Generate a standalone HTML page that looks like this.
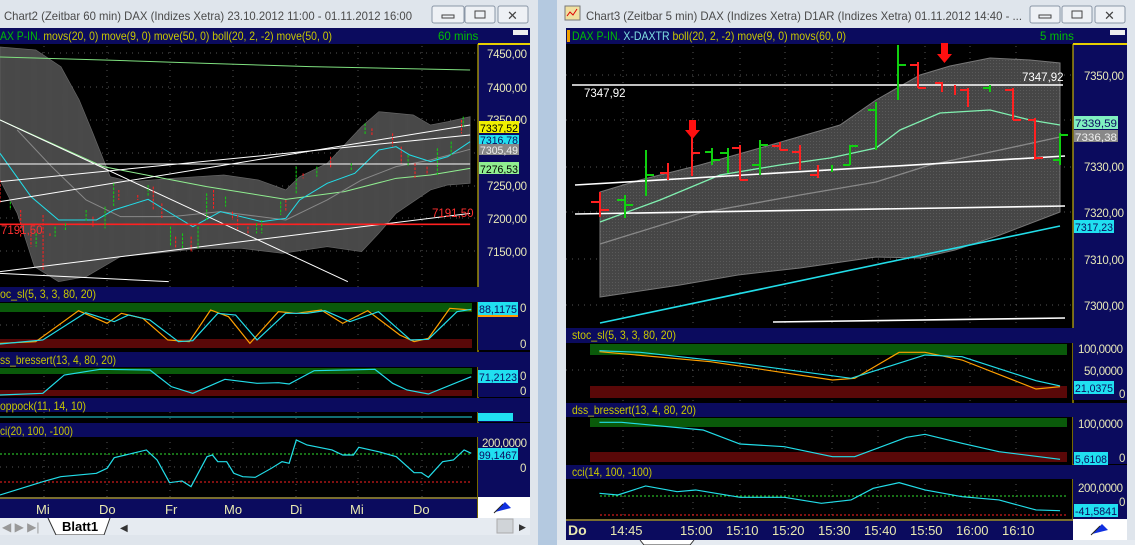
<!DOCTYPE html>
<html><head><meta charset="utf-8"><style>
html,body{margin:0;padding:0;width:1135px;height:545px;overflow:hidden;background:#b8cce0}
svg{display:block}
text{font-family:"Liberation Sans",sans-serif}
.t{font-size:12px;fill:#4a4a4a}
.h{font-size:12px;fill:#c8c800}
.ax{font-size:11.5px;fill:#e8e8b8}
.d{font-size:13px;fill:#e8e8b0}
</style></head><body>
<svg width="1135" height="545" viewBox="0 0 1135 545" xmlns="http://www.w3.org/2000/svg">
<defs>
<pattern id="dots" width="3" height="3" patternUnits="userSpaceOnUse"><rect width="3" height="3" fill="#464646"/><rect width="1" height="1" fill="#5a5a5a"/></pattern>
</defs>
<rect x="537" y="0" width="22" height="545" fill="#b4c9e0"/>
<!-- LEFT WINDOW -->
<rect x="0" y="0" width="538" height="545" fill="#dfe5ec"/>
<text x="4" y="20" class="t" textLength="408" lengthAdjust="spacingAndGlyphs">Chart2 (Zeitbar 60 min)  DAX (Indizes Xetra) 23.10.2012 11:00 - 01.11.2012 16:00</text>
<g fill="#eef1f5" stroke="#8a96a6"><rect x="432" y="6" width="32" height="17" rx="2"/><rect x="465" y="6" width="30" height="17" rx="2"/><rect x="498" y="6" width="30" height="17" rx="2"/></g>
<rect x="442" y="15" width="12" height="3" fill="none" stroke="#444"/><rect x="475" y="11" width="10" height="7" fill="none" stroke="#444"/>
<text x="507" y="20" style="font-size:13px;fill:#444">✕</text>
<rect x="0" y="28" width="530" height="490" fill="#000"/>
<rect x="0" y="28" width="530" height="16" fill="#0b0b5e"/>
<text x="0" y="40" class="h" textLength="332" lengthAdjust="spacingAndGlyphs"><tspan fill="#00c000">AX P-IN.</tspan> movs(20, 0) move(9, 0) move(50, 0) boll(20, 2, -2) move(50, 0)</text>
<text x="438" y="40" style="font-size:11.5px;fill:#00c000">60 mins</text>
<rect x="513" y="30" width="15" height="5" fill="#eee"/>
<g stroke="#555" stroke-dasharray="1,5"><line x1="44" y1="46" x2="44" y2="497"/><line x1="107" y1="46" x2="107" y2="497"/><line x1="170" y1="46" x2="170" y2="497"/><line x1="233" y1="46" x2="233" y2="497"/><line x1="296" y1="46" x2="296" y2="497"/><line x1="358" y1="46" x2="358" y2="497"/><line x1="422" y1="46" x2="422" y2="497"/>
<line x1="0" y1="53" x2="477" y2="53"/><line x1="0" y1="87" x2="477" y2="87"/><line x1="0" y1="120" x2="477" y2="120"/><line x1="0" y1="153" x2="477" y2="153"/><line x1="0" y1="186" x2="477" y2="186"/><line x1="0" y1="218" x2="477" y2="218"/><line x1="0" y1="251" x2="477" y2="251"/></g>
<g transform="translate(0,100) scale(0.3444,0.3333)" fill="none">
<polygon fill="url(#dots)" stroke="#666" stroke-width="2" points="0,-159 104,-150 177,-100 230,0 270,100 320,230 380,245 500,235 650,225 750,240 830,270 870,230 950,190 1050,80 1100,35 1200,45 1250,75 1300,65 1365,50 1365,250 1300,255 1250,270 1150,340 1100,400 1050,455 950,440 820,460 700,445 580,445 500,455 350,470 250,530 170,545 100,500 50,340 0,240"/>
<g stroke-width="3">
<polyline stroke="#7fe07f" points="0,-129 300,-120 600,-110 900,-100 1365,-90"/>
<polyline stroke="#90ee90" points="0,60 300,200 500,240 600,260 830,298 1000,275 1150,235 1250,225 1365,205"/>
<polyline stroke="#888" points="50,90 150,200 250,300 350,350 500,350 640,335 830,360 950,300 1050,240 1150,200 1250,180 1365,148"/>
<polyline stroke="#22dde8" points="0,160 90,290 170,360 280,360 330,330 430,298 480,330 560,380 640,335 760,365 830,355 870,300 950,250 1030,220 1100,150 1150,140 1190,165 1250,185 1300,170 1365,125"/>
<line stroke="#fff" x1="0" y1="192" x2="1365" y2="192"/>
<line stroke="#fff" x1="0" y1="305" x2="1365" y2="75"/>
<line stroke="#fff" x1="0" y1="245" x2="1365" y2="105"/>
<line stroke="#fff" x1="0" y1="60" x2="1010" y2="545"/>
<line stroke="#fff" x1="0" y1="515" x2="1365" y2="340"/>
<line stroke="#fff" x1="0" y1="520" x2="490" y2="545"/>
<line stroke="#ff2020" stroke-width="5" x1="0" y1="373" x2="1365" y2="373"/>
</g>
<g stroke-width="3" stroke-dasharray="8,4">
<path stroke="#ff2020" d="M0 240V310M60 330V410M90 390V440M125 345V510M145 400V410M270 350V380M345 270V300M400 285V300M445 260V330M470 310V355M510 410V445M555 410V455M620 270V330M675 335V360M690 345V390M720 380V400M830 300V335M880 220V235M960 170V205M1080 85V105M1140 100V140M1165 140V190M1205 190V235M1240 200V225M1340 60V100"/>
<path stroke="#10d010" d="M30 305V330M105 400V440M160 380V410M190 370V390M250 330V365M305 320V385M330 250V320M430 255V290M495 380V440M530 400V445M575 380V445M600 280V360M655 290V320M745 370V400M760 360V400M815 305V345M860 200V280M920 200V230M1020 190V215M1060 70V105M1185 165V200M1270 145V225M1310 125V165M1345 50V80"/>
</g>
</g>
<text x="1" y="234" style="font-size:11.5px;fill:#ff3030">7191,50</text>
<text x="432" y="217" style="font-size:11.5px;fill:#ff3030">7191,50</text>
<rect x="478" y="44" width="52" height="244" fill="#0b0b5e"/>
<line x1="478" y1="44" x2="530" y2="44" stroke="#e8d000" stroke-width="2"/>
<line x1="478" y1="44" x2="478" y2="518" stroke="#e8d000"/>
<g class="ax"><text x="487" y="58" textLength="40">7450,00</text><text x="487" y="92" textLength="40">7400,00</text><text x="487" y="124" textLength="40">7350,00</text></g>
<rect x="479" y="121" width="40" height="12" fill="#f0f000"/><text x="480" y="132" style="font-size:11px;fill:#000" textLength="38" lengthAdjust="spacingAndGlyphs">7337,52</text>
<rect x="479" y="135" width="40" height="9" fill="#20e0f0"/><text x="480" y="144" style="font-size:11px;fill:#0b0b5e" textLength="38" lengthAdjust="spacingAndGlyphs">7316,78</text>
<rect x="479" y="144" width="40" height="11" fill="#888"/><text x="480" y="154" style="font-size:11px;fill:#eee" textLength="38" lengthAdjust="spacingAndGlyphs">7305,49</text>
<rect x="479" y="162" width="40" height="12" fill="#90ee90"/><text x="480" y="173" style="font-size:11px;fill:#000" textLength="38" lengthAdjust="spacingAndGlyphs">7276,53</text>
<g class="ax"><text x="487" y="190" textLength="40">7250,00</text><text x="487" y="223" textLength="40">7200,00</text><text x="487" y="256" textLength="40">7150,00</text></g>
<!-- left stoc -->
<rect x="0" y="287" width="530" height="15" fill="#0b0b5e"/>
<text x="0" y="298" class="h" textLength="96" lengthAdjust="spacingAndGlyphs">oc_sl(5, 3, 3, 80, 20)</text>
<rect x="0" y="303" width="472" height="9" fill="#0a5a0a"/><rect x="0" y="339" width="472" height="9" fill="#5a0808"/>
<line x1="0" y1="325" x2="472" y2="325" stroke="#555" stroke-dasharray="1,5"/>
<rect x="478" y="302" width="52" height="48" fill="#0b0b5e"/>
<rect x="478" y="302" width="40" height="13" fill="#20e0f0"/><text x="479" y="313" style="font-size:11px;fill:#0b0b5e" textLength="38" lengthAdjust="spacingAndGlyphs">88,1175</text>
<rect x="478" y="315" width="40" height="2" fill="#ff9a00"/>
<text x="520" y="312" class="ax">0</text><text x="520" y="348" class="ax">0</text>
<g transform="translate(0,280) scale(0.357,0.3333)" fill="none" stroke-width="3.5">
<polyline stroke="#ffa000" points="0,190 100,185 220,92 300,130 340,100 400,115 470,180 530,185 590,90 640,110 700,190 780,95 830,100 900,90 960,130 1030,92 1120,165 1160,185 1200,175 1260,85 1320,90"/>
<polyline stroke="#22dde8" points="0,192 120,180 240,98 320,125 360,105 420,120 500,185 540,182 610,100 660,105 720,180 800,100 860,100 910,92 980,125 1060,95 1150,180 1200,178 1280,95 1320,88"/>
</g>
<rect x="0" y="352" width="530" height="15" fill="#0b0b5e"/>
<text x="0" y="364" class="h" textLength="116" lengthAdjust="spacingAndGlyphs">ss_bressert(13, 4, 80, 20)</text>
<rect x="0" y="368" width="472" height="6" fill="#0a5a0a"/><rect x="0" y="390" width="472" height="6" fill="#5a0808"/>
<rect x="478" y="367" width="52" height="30" fill="#0b0b5e"/>
<rect x="478" y="370" width="40" height="13" fill="#20e0f0"/><text x="479" y="381" style="font-size:11px;fill:#0b0b5e" textLength="38" lengthAdjust="spacingAndGlyphs">71,2123</text>
<text x="520" y="380" class="ax">0</text><text x="520" y="395" class="ax">0</text>
<g transform="translate(0,280) scale(0.357,0.3333)" fill="none" stroke-width="3.5">
<polyline stroke="#22dde8" points="0,345 120,340 180,285 280,268 420,270 480,320 540,340 630,298 720,310 780,308 810,312 880,272 1050,268 1100,310 1140,330 1200,342 1320,290"/>
</g>
<rect x="0" y="398" width="530" height="14" fill="#0b0b5e"/>
<text x="0" y="410" class="h" textLength="86" lengthAdjust="spacingAndGlyphs">oppock(11, 14, 10)</text>
<line x1="0" y1="417" x2="472" y2="417" stroke="#22dde8"/>
<rect x="478" y="412" width="52" height="10" fill="#0b0b5e"/><rect x="478" y="413" width="35" height="8" fill="#20e0f0"/>
<rect x="0" y="423" width="530" height="14" fill="#0b0b5e"/>
<text x="0" y="435" class="h" textLength="73" lengthAdjust="spacingAndGlyphs">ci(20, 100, -100)</text>
<line x1="0" y1="454" x2="472" y2="454" stroke="#30e030" stroke-dasharray="2,2"/>
<line x1="0" y1="482" x2="472" y2="482" stroke="#ff2020" stroke-dasharray="2,2"/>
<line x1="0" y1="467" x2="472" y2="467" stroke="#555" stroke-dasharray="1,5"/>
<rect x="478" y="437" width="52" height="60" fill="#0b0b5e"/>
<text x="482" y="447" class="ax" textLength="45">200,0000</text>
<rect x="478" y="448" width="40" height="12" fill="#20e0f0"/><text x="479" y="459" style="font-size:11px;fill:#0b0b5e" textLength="38" lengthAdjust="spacingAndGlyphs">99,1467</text>
<text x="520" y="472" class="ax">0</text>
<g transform="translate(0,280) scale(0.357,0.3333)" fill="none" stroke-width="3.5">
<polyline stroke="#22dde8" points="0,645 120,605 170,590 270,580 300,565 320,533 410,510 440,540 475,608 510,603 535,620 580,530 595,525 610,545 635,545 655,580 680,590 715,592 760,565 790,545 810,550 830,480 860,495 930,510 960,525 990,525 1005,502 1060,515 1110,530 1160,578 1180,578 1200,592 1240,545 1270,540 1300,510 1320,520"/>
</g>
<rect x="0" y="497" width="477" height="21" fill="#0b0b5e"/>
<line x1="0" y1="498" x2="477" y2="498" stroke="#e8d000"/>
<text x="36" y="514" class="d">Mi</text><text x="99" y="514" class="d">Do</text><text x="165" y="514" class="d">Fr</text><text x="224" y="514" class="d">Mo</text><text x="290" y="514" class="d">Di</text><text x="350" y="514" class="d">Mi</text><text x="413" y="514" class="d">Do</text>
<rect x="478" y="497" width="52" height="21" fill="#fff"/>
<path d="M495 512 L505 502 L511 508 Z" fill="#1030e0"/><line x1="494" y1="513" x2="503" y2="504" stroke="#222"/>
<rect x="0" y="518" width="530" height="17" fill="#e6ebf1"/>
<text x="2" y="531" style="font-size:12px;fill:#999">◀ ▶ ▶|</text>
<path d="M48 518 L56 535 L104 535 L110 518" fill="#fff" stroke="#333"/>
<text x="62" y="531" style="font-size:13px;font-weight:bold;fill:#000">Blatt1</text>
<text x="120" y="531" style="font-size:10px;fill:#333">◀</text>
<rect x="497" y="519" width="16" height="14" fill="#d0d4d8" stroke="#aaa"/>
<text x="519" y="530" style="font-size:9px;fill:#333">▶</text>
<rect x="0" y="535" width="538" height="10" fill="#dfe5ec"/>
<!-- RIGHT WINDOW -->
<rect x="557" y="0" width="578" height="545" fill="#dfe5ec"/>
<rect x="565" y="6" width="15" height="14" fill="#f0e0a0" stroke="#777"/><path d="M567 16 l3 -4 l3 3 l4 -6" stroke="#d00" fill="none"/>
<text x="586" y="20" class="t" textLength="436" lengthAdjust="spacingAndGlyphs">Chart3 (Zeitbar 5 min)  DAX (Indizes Xetra) D1AR (Indizes Xetra) 01.11.2012 14:40 - ...</text>
<g fill="#eef1f5" stroke="#8a96a6"><rect x="1030" y="6" width="30" height="17" rx="2"/><rect x="1062" y="6" width="30" height="17" rx="2"/><rect x="1095" y="6" width="30" height="17" rx="2"/></g>
<rect x="1039" y="15" width="12" height="3" fill="none" stroke="#444"/><rect x="1072" y="11" width="10" height="7" fill="none" stroke="#444"/>
<text x="1104" y="20" style="font-size:13px;fill:#444">✕</text>
<rect x="566" y="28" width="561" height="512" fill="#000"/>
<rect x="566" y="28" width="561" height="16" fill="#0b0b5e"/>
<rect x="567" y="30" width="3" height="12" fill="#f0a000"/>
<text x="572" y="40" class="h" textLength="274" lengthAdjust="spacingAndGlyphs"><tspan fill="#00c000">DAX P-IN.</tspan> <tspan fill="#7fe0e0">X-DAXTR</tspan> boll(20, 2, -2) move(9, 0) movs(60, 0)</text>
<text x="1040" y="40" style="font-size:11.5px;fill:#00c000">5 mins</text>
<rect x="1110" y="30" width="15" height="5" fill="#eee"/>
<g stroke="#555" stroke-dasharray="1,5"><line x1="623" y1="46" x2="623" y2="518"/><line x1="693" y1="46" x2="693" y2="518"/><line x1="740" y1="46" x2="740" y2="518"/><line x1="785" y1="46" x2="785" y2="518"/><line x1="832" y1="46" x2="832" y2="518"/><line x1="878" y1="46" x2="878" y2="518"/><line x1="925" y1="46" x2="925" y2="518"/><line x1="970" y1="46" x2="970" y2="518"/><line x1="1016" y1="46" x2="1016" y2="518"/>
<line x1="566" y1="75" x2="1073" y2="75"/><line x1="566" y1="120" x2="1073" y2="120"/><line x1="566" y1="167" x2="1073" y2="167"/><line x1="566" y1="212" x2="1073" y2="212"/><line x1="566" y1="259" x2="1073" y2="259"/><line x1="566" y1="305" x2="1073" y2="305"/></g>
<polygon fill="url(#dots)" stroke="#777" points="600,192 640,180 700,165 760,148 840,125 876,100 920,75 950,66 990,58 1030,60 1060,63 1060,212 1000,235 955,250 920,258 876,257 800,268 738,275 680,285 600,297"/>
<g fill="none" stroke-width="1.3">
<polyline stroke="#888" points="600,244 700,213 800,195 876,182 930,165 1000,150 1060,137"/>
<polyline stroke="#80f0b0" points="600,222 660,200 720,175 780,165 830,158 876,148 900,130 940,113 990,110 1030,120 1060,125"/>
<line stroke="#22dde8" stroke-width="1.6" x1="600" y1="323" x2="1060" y2="226"/>
<line stroke="#fff" stroke-width="1.6" x1="572" y1="85" x2="1063" y2="85"/>
<line stroke="#fff" stroke-width="1.6" x1="575" y1="185" x2="1065" y2="156"/>
<line stroke="#fff" stroke-width="1.6" x1="575" y1="214" x2="1065" y2="206"/>
<line stroke="#fff" stroke-width="1.6" x1="773" y1="322" x2="1065" y2="318"/>
</g>
<g fill="none" stroke-width="2">
<path stroke="#ff2020" d="M600 192V217M591 202H600M600 210H609M668 163V180M660 173H668M692 120V176M692 153H700M740 145V180M732 148H740M740 180H748M780 142V150M772 146H780M780 150H788M800 145V170M792 152H800M818 165V178M810 175H818M918 62V88M910 65H918M918 88H926M942 82V92M935 83H942M955 85V95M968 88V107M960 90H968M1013 88V120M1005 90H1013M1013 120H1021M1035 118V160M1028 120H1035M1035 158H1043"/>
<path stroke="#10d010" d="M625 195V218M617 200H625M625 205H633M646 150V196M646 175H654M712 148V165M705 152H712M712 160H720M728 148V173M720 153H728M760 140V175M752 165H760M760 145H768M832 165V172M850 145V165M843 165H850M850 146H858M876 102V150M868 110H876M898 45V100M898 65H906M990 85V92M983 88H990M1060 133V165M1053 160H1060M1060 135H1068"/>
</g>
<path d="M689 120h7v10h4l-7.5 9l-7.5 -9h4z" fill="#ff1010"/>
<path d="M941 43h7v11h4l-7.5 9l-7.5 -9h4z" fill="#ff1010"/>
<text x="584" y="97" style="font-size:11.5px;fill:#fff">7347,92</text>
<text x="1022" y="81" style="font-size:11.5px;fill:#fff">7347,92</text>
<rect x="1073" y="44" width="54" height="284" fill="#0b0b5e"/>
<line x1="1073" y1="44" x2="1127" y2="44" stroke="#e8d000" stroke-width="2"/>
<line x1="1073" y1="44" x2="1073" y2="540" stroke="#e8d000"/>
<text x="1084" y="80" class="ax" textLength="40">7350,00</text>
<rect x="1074" y="116" width="44" height="13" fill="#80f0c0"/><text x="1075" y="127" style="font-size:11px;fill:#0b0b5e" textLength="42" lengthAdjust="spacingAndGlyphs">7339,59</text>
<rect x="1074" y="130" width="44" height="12" fill="#888"/><text x="1075" y="141" style="font-size:11px;fill:#eee" textLength="42" lengthAdjust="spacingAndGlyphs">7336,38</text>
<text x="1084" y="171" class="ax" textLength="40">7330,00</text><text x="1084" y="217" class="ax" textLength="40">7320,00</text>
<rect x="1074" y="220" width="40" height="13" fill="#20e0f0"/><text x="1075" y="231" style="font-size:11px;fill:#0b0b5e" textLength="38" lengthAdjust="spacingAndGlyphs">7317,23</text>
<text x="1084" y="264" class="ax" textLength="40">7310,00</text><text x="1084" y="310" class="ax" textLength="40">7300,00</text>
<rect x="566" y="328" width="561" height="15" fill="#0b0b5e"/>
<text x="572" y="339" class="h" textLength="104" lengthAdjust="spacingAndGlyphs">stoc_sl(5, 3, 3, 80, 20)</text>
<rect x="590" y="344" width="477" height="11" fill="#0a5a0a"/><rect x="590" y="386" width="477" height="12" fill="#5a0808"/>
<line x1="566" y1="370" x2="1067" y2="370" stroke="#555" stroke-dasharray="1,5"/>
<rect x="1073" y="343" width="54" height="57" fill="#0b0b5e"/>
<text x="1078" y="353" class="ax" textLength="45">100,0000</text><text x="1084" y="375" class="ax" textLength="39">50,0000</text>
<rect x="1074" y="381" width="40" height="13" fill="#20e0f0"/><text x="1075" y="392" style="font-size:11px;fill:#0b0b5e" textLength="38" lengthAdjust="spacingAndGlyphs">21,0375</text>
<text x="1119" y="398" class="ax">0</text>
<rect x="566" y="403" width="561" height="14" fill="#0b0b5e"/>
<text x="572" y="414" class="h" textLength="124" lengthAdjust="spacingAndGlyphs">dss_bressert(13, 4, 80, 20)</text>
<rect x="590" y="418" width="477" height="9" fill="#0a5a0a"/><rect x="590" y="452" width="477" height="10" fill="#5a0808"/>
<rect x="1073" y="417" width="54" height="47" fill="#0b0b5e"/>
<text x="1078" y="428" class="ax" textLength="45">100,0000</text>
<rect x="1074" y="452" width="34" height="13" fill="#20e0f0"/><text x="1075" y="463" style="font-size:11px;fill:#0b0b5e" textLength="32" lengthAdjust="spacingAndGlyphs">5,6108</text>
<text x="1119" y="462" class="ax">0</text>
<rect x="566" y="465" width="561" height="14" fill="#0b0b5e"/>
<text x="572" y="476" class="h" textLength="80" lengthAdjust="spacingAndGlyphs">cci(14, 100, -100)</text>
<line x1="600" y1="496" x2="1067" y2="496" stroke="#30e030" stroke-dasharray="2,2"/>
<line x1="600" y1="515" x2="1067" y2="515" stroke="#ff2020" stroke-dasharray="2,2"/>
<rect x="1073" y="479" width="54" height="40" fill="#0b0b5e"/>
<text x="1078" y="492" class="ax" textLength="45">200,0000</text><text x="1119" y="506" class="ax">0</text>
<rect x="1074" y="504" width="44" height="13" fill="#20e0f0"/><text x="1075" y="515" style="font-size:11px;fill:#0b0b5e" textLength="42" lengthAdjust="spacingAndGlyphs">-41,5841</text>
<g transform="translate(555,320) scale(0.37,0.3333)" fill="none" stroke-width="3.5">
<polyline stroke="#ffa000" points="120,95 420,125 750,180 810,175 930,97 1000,97 1100,120 1300,207 1365,200"/>
<polyline stroke="#22dde8" points="120,92 230,97 500,130 800,175 1000,105 1100,110 1300,182 1365,198"/>
<polyline stroke="#22dde8" points="120,307 180,307 400,330 500,372 620,380 750,410 810,410 950,352 1000,343 1100,370 1200,395 1365,418"/>
<polyline stroke="#22dde8" points="120,520 170,525 245,498 330,515 380,510 500,532 620,532 720,550 800,540 860,505 930,488 1000,510 1100,530 1200,540 1300,570 1365,572"/>
</g>
<rect x="566" y="519" width="507" height="21" fill="#0b0b5e"/>
<line x1="566" y1="520" x2="1073" y2="520" stroke="#e8d000"/>
<text x="568" y="535" style="font-size:14px;font-weight:bold;fill:#e8e8b0">Do</text>
<text x="610" y="535" class="d">14:45</text><text x="680" y="535" class="d">15:00</text><text x="726" y="535" class="d">15:10</text><text x="772" y="535" class="d">15:20</text><text x="818" y="535" class="d">15:30</text><text x="864" y="535" class="d">15:40</text><text x="910" y="535" class="d">15:50</text><text x="956" y="535" class="d">16:00</text><text x="1002" y="535" class="d">16:10</text>
<rect x="1073" y="519" width="54" height="21" fill="#fff"/>
<path d="M1092 534 L1102 524 L1108 530 Z" fill="#1030e0"/><line x1="1091" y1="535" x2="1100" y2="526" stroke="#222"/>
<rect x="557" y="540" width="578" height="5" fill="#e6ebf1"/>
<path d="M640 540 L644 545 L690 545 L694 540" fill="#fff" stroke="#333"/>
</svg>
</body></html>
